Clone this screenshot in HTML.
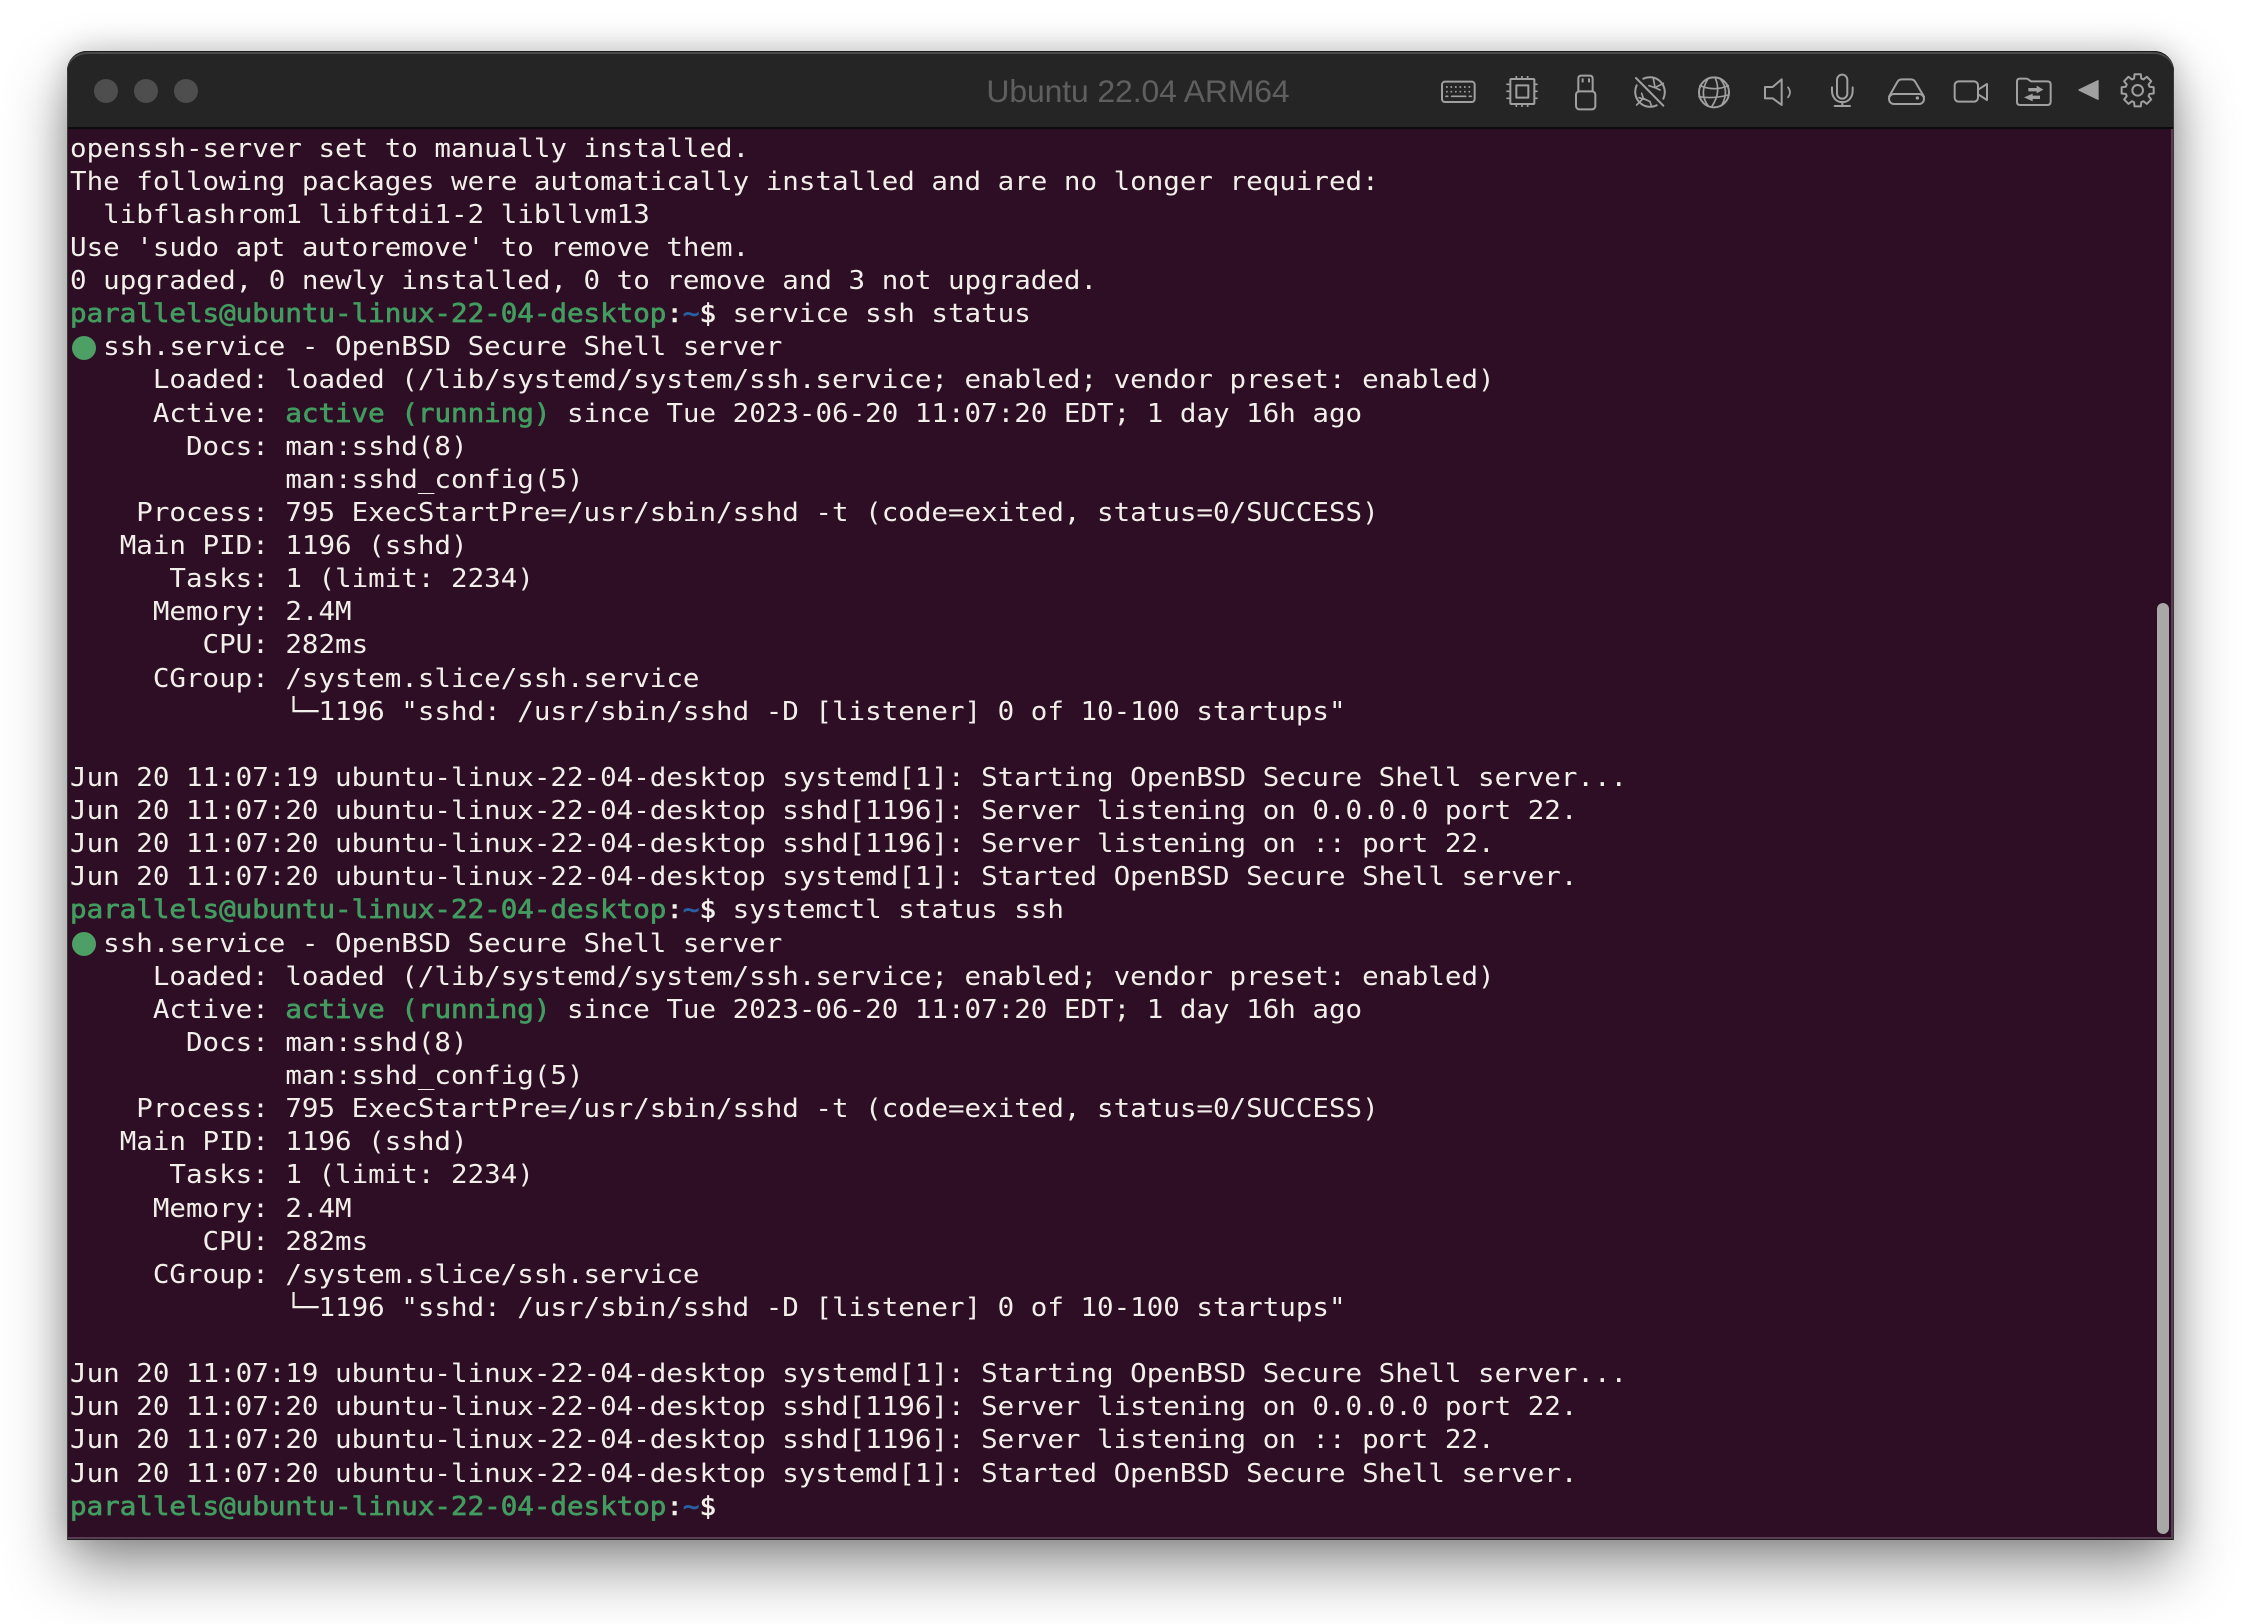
<!DOCTYPE html>
<html><head><meta charset="utf-8"><style>
html,body{margin:0;padding:0;width:2242px;height:1624px;background:#fff;overflow:hidden}
#win{position:absolute;left:67px;top:51px;width:2107px;height:1489px;background:#2d0e24;border-radius:20px 20px 0 0;box-shadow:0 28px 62px rgba(0,0,0,.42),0 0 30px rgba(0,0,0,.18)}
#bar{position:absolute;left:0;top:0;width:2107px;height:78px;background:#252525;border-radius:20px 20px 0 0;box-sizing:border-box;border-top:1px solid #1a1a1a;box-shadow:inset 0 2px 0 #4a4a4a;border-bottom:2px solid #0c0c0c}
.tl{position:absolute;top:27px;width:24px;height:24px;border-radius:50%;background:#4e4e4e}
#title{position:absolute;left:963px;top:72px;width:350px;text-align:center;font:31.9px/38px "Liberation Sans",sans-serif;color:#5f5f5f;letter-spacing:-.1px}
#term{position:absolute;left:70px;top:132.5px;margin:0;white-space:pre;font:25.5px/33.12px "DejaVu Sans Mono",monospace;color:#f2efea;transform:scaleX(1.079);transform-origin:0 0;filter:blur(.35px)}
.g{color:#429c60;-webkit-text-stroke:.7px #429c60}.b{color:#2b5fa3;-webkit-text-stroke:.7px #2b5fa3}.w{-webkit-text-stroke:.6px #f2efea}
.dot{position:absolute;left:72px;width:24px;height:24px;border-radius:50%;background:#4d9f65}
#edgeR{position:absolute;left:2171px;top:129px;width:2px;height:1410px;background:#5b3d53}
#edgeB{position:absolute;left:67px;top:1537px;width:2107px;height:2px;background:#5b3d53}
#edgeD{position:absolute;left:67px;top:1539px;width:2107px;height:1px;background:#1c1c1c}
#edgeL{position:absolute;left:67px;top:70px;width:1px;height:1470px;background:#3a3a3a}
#edgeRD{position:absolute;left:2173px;top:70px;width:1px;height:1470px;background:#3a3a3a}
#sb{position:absolute;left:2157px;top:603px;width:12px;height:931px;border-radius:6px;background:#a8a8a8}
svg{position:absolute;left:0;top:0}
</style></head><body>
<div id="win"><div id="bar">
<div class="tl" style="left:27px"></div><div class="tl" style="left:67px"></div><div class="tl" style="left:107px"></div>
</div></div>
<div id="title">Ubuntu 22.04 ARM64</div>
<pre id="term">openssh-server set to manually installed.
The following packages were automatically installed and are no longer required:
  libflashrom1 libftdi1-2 libllvm13
Use 'sudo apt autoremove' to remove them.
0 upgraded, 0 newly installed, 0 to remove and 3 not upgraded.
<span class="g">parallels@ubuntu-linux-22-04-desktop</span><span class="w">:</span><span class="b">~</span><span class="w">$</span> service ssh status
  ssh.service - OpenBSD Secure Shell server
     Loaded: loaded (/lib/systemd/system/ssh.service; enabled; vendor preset: enabled)
     Active: <span class="g">active (running)</span> since Tue 2023-06-20 11:07:20 EDT; 1 day 16h ago
       Docs: man:sshd(8)
             man:sshd_config(5)
    Process: 795 ExecStartPre=/usr/sbin/sshd -t (code=exited, status=0/SUCCESS)
   Main PID: 1196 (sshd)
      Tasks: 1 (limit: 2234)
     Memory: 2.4M
        CPU: 282ms
     CGroup: /system.slice/ssh.service
             └─1196 "sshd: /usr/sbin/sshd -D [listener] 0 of 10-100 startups"

Jun 20 11:07:19 ubuntu-linux-22-04-desktop systemd[1]: Starting OpenBSD Secure Shell server...
Jun 20 11:07:20 ubuntu-linux-22-04-desktop sshd[1196]: Server listening on 0.0.0.0 port 22.
Jun 20 11:07:20 ubuntu-linux-22-04-desktop sshd[1196]: Server listening on :: port 22.
Jun 20 11:07:20 ubuntu-linux-22-04-desktop systemd[1]: Started OpenBSD Secure Shell server.
<span class="g">parallels@ubuntu-linux-22-04-desktop</span><span class="w">:</span><span class="b">~</span><span class="w">$</span> systemctl status ssh
  ssh.service - OpenBSD Secure Shell server
     Loaded: loaded (/lib/systemd/system/ssh.service; enabled; vendor preset: enabled)
     Active: <span class="g">active (running)</span> since Tue 2023-06-20 11:07:20 EDT; 1 day 16h ago
       Docs: man:sshd(8)
             man:sshd_config(5)
    Process: 795 ExecStartPre=/usr/sbin/sshd -t (code=exited, status=0/SUCCESS)
   Main PID: 1196 (sshd)
      Tasks: 1 (limit: 2234)
     Memory: 2.4M
        CPU: 282ms
     CGroup: /system.slice/ssh.service
             └─1196 "sshd: /usr/sbin/sshd -D [listener] 0 of 10-100 startups"

Jun 20 11:07:19 ubuntu-linux-22-04-desktop systemd[1]: Starting OpenBSD Secure Shell server...
Jun 20 11:07:20 ubuntu-linux-22-04-desktop sshd[1196]: Server listening on 0.0.0.0 port 22.
Jun 20 11:07:20 ubuntu-linux-22-04-desktop sshd[1196]: Server listening on :: port 22.
Jun 20 11:07:20 ubuntu-linux-22-04-desktop systemd[1]: Started OpenBSD Secure Shell server.
<span class="g">parallels@ubuntu-linux-22-04-desktop</span><span class="w">:</span><span class="b">~</span><span class="w">$</span>
</pre>
<div class="dot" style="top:335.5px"></div>
<div class="dot" style="top:931.5px"></div>
<div id="edgeR"></div><div id="edgeB"></div><div id="edgeD"></div><div id="edgeL"></div><div id="edgeRD"></div>
<div id="sb"></div>
<svg width="2242" height="200" viewBox="0 0 2242 200" fill="none" stroke="#a0a0a0" stroke-width="2" stroke-linejoin="round" stroke-linecap="round">
<g transform="translate(1400 30) scale(.33333)" stroke-width="6">
 <!-- keyboard -->
 <rect x="126" y="155" width="98" height="61" rx="9"/>
 <g stroke-width="5" stroke-dasharray="5 8.5" stroke-linecap="butt">
  <path d="M138 171H214M138 185H214"/>
 </g>
 <path d="M155 199H197" stroke-width="5"/>
 <path d="M138 199H143M208 199H214" stroke-width="5"/>
 <!-- chip -->
 <rect x="331" y="147" width="72" height="75" rx="3"/>
 <rect x="349" y="166" width="36" height="37"/>
 <path stroke-width="5" stroke-linecap="butt" d="M349 138V146M366 138V146M383 138V146M349 223V231M366 223V231M383 223V231M319 163H330M319 184H330M319 205H330M404 163H413M404 184H413M404 205H413"/>
 <!-- usb -->
 <rect x="528" y="184" width="58" height="54" rx="10"/>
 <path d="M535 184V146Q535 137 544 137H569Q578 137 578 146V184"/>
 <path stroke-width="6" stroke-linecap="butt" d="M548 145V157M567 145V157"/>
 <!-- network off -->
 <path d="M730 146A45 45 0 0 1 790 206M770 226A45 45 0 0 1 710 166"/>
 <path d="M708 144L790 227"/>
 <path stroke-width="5" d="M747 167L765 173L790 160M760 145L765 173L780 180M717 203L740 210M725 190L730 205L710 225M730 205L750 215L755 230"/>
 <!-- globe -->
 <circle cx="942" cy="187" r="45"/>
 <path stroke-width="5" d="M945 142Q965 187 935 230M925 145Q895 190 925 228M960 146Q990 180 965 226M900 167Q945 185 985 167M897 200Q940 207 985 195"/>
 <!-- speaker -->
 <path d="M1095 171H1118L1145 148V225L1118 205H1095Z"/>
 <path stroke-width="5" d="M1164 172Q1176 187 1164 202"/>
 <!-- mic -->
 <rect x="1311" y="134" width="31" height="72" rx="15.5"/>
 <path d="M1296 172V182C1296 228 1358 228 1358 182V172"/>
 <path d="M1327 216V228M1304 228H1350"/>
</g>
<g transform="translate(1840 30) scale(.33333)" stroke-width="6">
 <!-- drive -->
 <path d="M147 200L172 156Q176 148 186 148H212Q222 148 226 156L252 200"/>
 <rect x="147" y="192" width="105" height="30" rx="15"/>
 <circle cx="232" cy="204" r="5" fill="#a0a0a0" stroke="none"/>
 <!-- camera -->
 <rect x="344" y="154" width="70" height="61" rx="12"/>
 <path d="M416 178L441 162V210L416 194"/>
 <!-- folder -->
 <path d="M531 155Q531 146 540 146H558Q563 146 566 149L573 154H622Q632 154 632 163V215Q632 225 622 225H540Q531 225 531 216Z"/>
 <path fill="#a0a0a0" stroke="none" d="M565 174H590V167L610 179L590 190V184H565ZM578 191V197H600V207H578V214L552 202Z"/>
 <!-- back triangle -->
 <path fill="#a0a0a0" stroke-width="4" d="M717 180L774 152V208Z"/>
 <!-- gear -->
 <g transform="translate(893 181)">
  <path d="M-10.8 -35.4L-9.4 -48.1L9.4 -48.1L10.8 -35.4L17.4 -32.7L27.4 -40.7L40.7 -27.4L32.7 -17.4L35.4 -10.8L48.1 -9.4L48.1 9.4L35.4 10.8L32.7 17.4L40.7 27.4L27.4 40.7L17.4 32.7L10.8 35.4L9.4 48.1L-9.4 48.1L-10.8 35.4L-17.4 32.7L-27.4 40.7L-40.7 27.4L-32.7 17.4L-35.4 10.8L-48.1 9.4L-48.1 -9.4L-35.4 -10.8L-32.7 -17.4L-40.7 -27.4L-27.4 -40.7L-17.4 -32.7Z"/>
  <circle r="16"/>
 </g>
</g>
</svg>
</body></html>
